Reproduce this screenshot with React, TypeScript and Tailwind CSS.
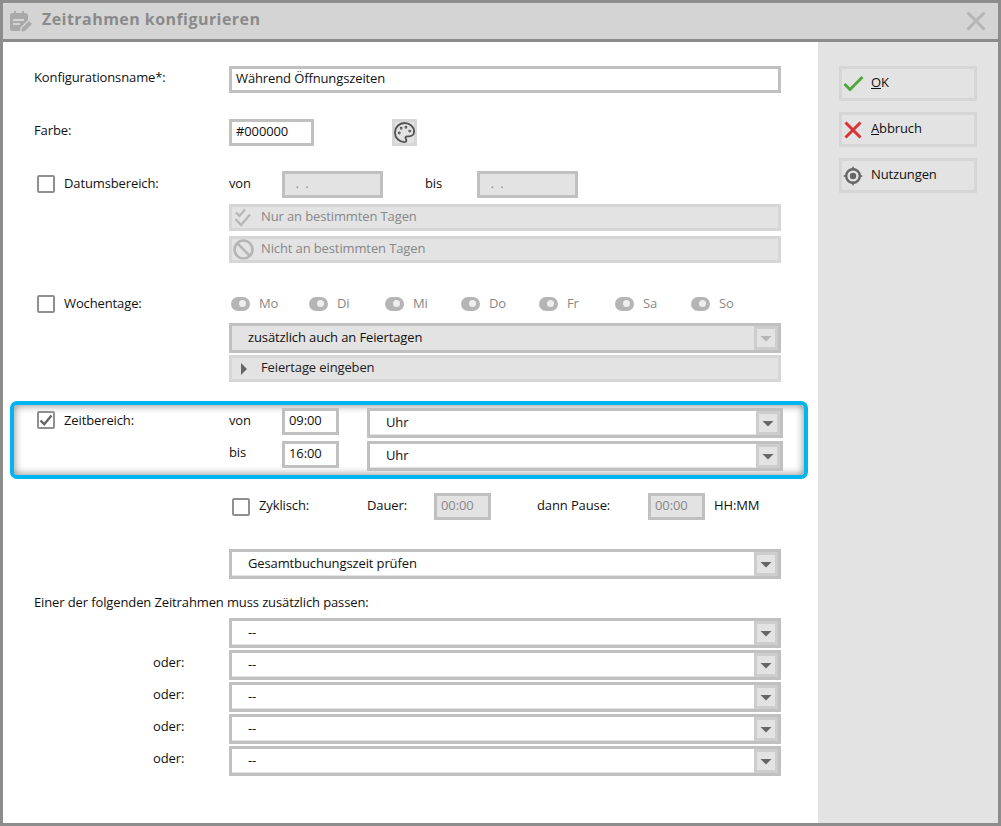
import type { ReactNode } from "react";
import { Palette } from "lucide-react";

function Checkbox({ checked = false }: { checked?: boolean }) {
  return (
    <span className="flex h-[18px] w-[18px] shrink-0 items-center justify-center rounded-[2px] border-2 border-[#8f8f8f] bg-white">
      {checked && (
        <svg width="14" height="14" viewBox="0 0 14 14" fill="none">
          <path d="M1.5 7.5 5.2 11.2 12.5 2.5" stroke="#666" strokeWidth="2.4" />
        </svg>
      )}
    </span>
  );
}

function TextBox({ value, width, disabled = false }: { value: string; width: string; disabled?: boolean }) {
  return (
    <div
      className={`flex h-[27px] shrink-0 items-center whitespace-pre border-[3px] border-[#c0c0c0] pb-[2px] pl-1 ${width} ${
        disabled ? "bg-[#e3e3e3] text-[#888]" : "bg-white text-[#111]"
      }`}
    >
      {value}
    </div>
  );
}

function SelectBox({ value, width = "w-[552px]", disabled = false }: { value: string; width?: string; disabled?: boolean }) {
  return (
    <div className={`flex h-[30px] shrink-0 border-[3px] border-[#c0c0c0] ${width} ${disabled ? "bg-[#e3e3e3]" : "bg-white"}`}>
      <div className="flex-1 border-b border-[#e3e3e3] pl-4 leading-[23px] text-[#111]">{value}</div>
      <div className="flex w-[24px] shrink-0 items-center justify-center border-[3px] border-[#cdcdcd] bg-[#e3e3e3]">
        <svg width="12" height="7" viewBox="0 0 12 7">
          <path d="M0.5 1H11.5L6 6.5Z" fill={disabled ? "#b5b5b5" : "#666"} />
        </svg>
      </div>
    </div>
  );
}

function BarButton({ icon, label, dark = false }: { icon: ReactNode; label: string; dark?: boolean }) {
  return (
    <div className={`flex h-[27px] w-[552px] items-center border-[3px] border-[#d6d6d6] bg-[#e3e3e3] ${dark ? "text-[#222]" : "text-[#888]"}`}>
      <span className="flex w-[29px] shrink-0 items-center pl-[1px]">{icon}</span>
      <span className="pb-[2px]">{label}</span>
    </div>
  );
}

function SideButton({ icon, children }: { icon: ReactNode; children: ReactNode }) {
  return (
    <div className="flex h-[35px] w-[138px] items-center border-[3px] border-[#d6d6d6] bg-[#e3e3e3] text-[#111]">
      <span className="flex w-[29px] shrink-0 items-center pl-[1px]">{icon}</span>
      <span className="pb-[2px]">{children}</span>
    </div>
  );
}

const days = [
  { name: "Mo", width: "w-[78px]" },
  { name: "Di", width: "w-[76px]" },
  { name: "Mi", width: "w-[76px]" },
  { name: "Do", width: "w-[78px]" },
  { name: "Fr", width: "w-[76px]" },
  { name: "Sa", width: "w-[76px]" },
  { name: "So", width: "w-[76px]" },
];

export default function App() {
  return (
    <div className="flex h-[826px] w-[1001px] flex-col overflow-hidden border-[3px] border-[#8c8c8c] bg-white font-['Open_Sans',sans-serif] text-[13px] tracking-[-0.12px] text-[#111]">
      <header className="flex h-[39px] shrink-0 items-center border-b-[3px] border-[#8c8c8c] bg-[#d4d4d4] pl-[7px] pr-[12px]">
        <svg width="22" height="21" viewBox="0 0 22 21" fill="#a9a9a9">
          <path d="M4 0h2v2h6V0h2v2h1.5A2.5 2.5 0 0 1 18 4.5V9l-7.5 7.5-.5 3.5H2.5A2.5 2.5 0 0 1 0 17.500V4.500A2.500 2.500 0 0 1 2.500 2H4Z" />
          <path d="M3 8h11v2H3ZM3 12h7v2H3Z" fill="#d4d4d4" />
          <path d="M12 17 19 10l3 3-7 7-3.500.5Z" />
        </svg>
        <h1 className="ml-[10px] pb-[4px] text-[16px] font-bold tracking-[0.45px] text-[#8a8a8a]">Zeitrahmen konfigurieren</h1>
        <svg className="ml-auto" width="20" height="20" viewBox="0 0 20 20" fill="none">
          <path d="M1.500 1.500 18.500 18.500M18.500 1.500 1.500 18.500" stroke="#b5b5b5" strokeWidth="3" />
        </svg>
      </header>

      <div className="flex min-h-0 flex-1">
        <main className="w-[815px] shrink-0 pt-[24px]">
          <div className="flex h-[27px] pl-[31px]">
            <span className="w-[195px] leading-[22px]">Konfigurationsname*:</span>
            <TextBox value="Während Öffnungszeiten" width="w-[552px]" />
          </div>

          <div className="mt-[26px] flex h-[27px] pl-[31px]">
            <span className="w-[195px] leading-[22px]">Farbe:</span>
            <TextBox value="#000000" width="w-[85px]" />
            <div className="ml-[78px] flex h-[27px] w-[25px] items-center justify-center border-[3px] border-[#d6d6d6] bg-[#e3e3e3]">
              <Palette size={23} strokeWidth={2} className="shrink-0 text-[#555]" />
            </div>
          </div>

          <div className="mt-[25px] flex h-[27px] pl-[34px]">
            <span className="mt-[4px]">
              <Checkbox />
            </span>
            <span className="ml-[9px] w-[165px] leading-[25px]">Datumsbereich:</span>
            <span className="w-[53px] leading-[25px]">von</span>
            <TextBox value="  .  ." width="w-[101px]" disabled />
            <span className="ml-[42px] w-[52px] leading-[25px]">bis</span>
            <TextBox value="  .  ." width="w-[101px]" disabled />
          </div>

          <div className="ml-[226px] mt-[6px]">
            <BarButton
              label="Nur an bestimmten Tagen"
              icon={
                <svg width="20" height="20" viewBox="0 0 20 20" fill="none" stroke="#b5b5b5" strokeWidth="2.200">
                  <path d="M3 4.500 6.500 8 12 1.500M2.500 11 8 17 17 6.500" />
                </svg>
              }
            />
            <div className="mt-[5px]">
              <BarButton
                label="Nicht an bestimmten Tagen"
                icon={
                  <svg width="21" height="21" viewBox="0 0 21 21" fill="none" stroke="#b5b5b5" strokeWidth="2.600">
                    <circle cx="10.500" cy="10.500" r="9" />
                    <path d="M4.200 4.200 16.800 16.800" />
                  </svg>
                }
              />
            </div>
          </div>

          <div className="mt-[27px] flex h-[27px] items-center pl-[34px]">
            <Checkbox />
            <span className="ml-[9px] w-[167px]">Wochentage:</span>
            {days.map((day) => (
              <div key={day.name} className={`flex shrink-0 items-center ${day.width}`}>
                <span className="flex h-[14px] w-[19px] items-center justify-end rounded-full bg-[#b5b5b5] pr-[4px]">
                  <span className="h-[7px] w-[7px] rounded-full bg-[#eee]" />
                </span>
                <span className="ml-[9px] text-[#888]">{day.name}</span>
              </div>
            ))}
          </div>

          <div className="ml-[226px] mt-[6px]">
            <SelectBox value="zusätzlich auch an Feiertagen" disabled />
            <div className="mt-[2px]">
              <BarButton
                dark
                label="Feiertage eingeben"
                icon={
                  <svg className="ml-[8px]" width="6" height="12" viewBox="0 0 6 12">
                    <path d="M0 0 6 6 0 12Z" fill="#666" />
                  </svg>
                }
              />
            </div>
          </div>

          <section className="ml-[7px] mt-[19px] h-[78px] w-[798px] rounded-[7px] border-[4px] border-[#00b4f0] pt-[3px] shadow-[inset_0_0_8px_rgba(0,0,0,0.5)]">
            <div className="flex h-[30px] pl-[23px]">
              <span className="mt-[3px]">
                <Checkbox checked />
              </span>
              <span className="ml-[9px] w-[165px] pt-[1px] leading-[23px]">Zeitbereich:</span>
              <span className="w-[53px] pt-[1px] leading-[23px]">von</span>
              <TextBox value="09:00" width="w-[57px]" />
              <div className="ml-[28px]">
                <SelectBox value="Uhr" width="w-[416px]" />
              </div>
            </div>
            <div className="mt-[3px] flex h-[30px] pl-[215px]">
              <span className="w-[53px] leading-[23px]">bis</span>
              <TextBox value="16:00" width="w-[57px]" />
              <div className="ml-[28px]">
                <SelectBox value="Uhr" width="w-[416px]" />
              </div>
            </div>
          </section>

          <div className="mt-[14px] flex h-[27px] items-center pl-[229px]">
            <Checkbox />
            <span className="ml-[9px] w-[108px] pb-[2px]">Zyklisch:</span>
            <span className="w-[67px] pb-[2px]">Dauer:</span>
            <TextBox value="00:00" width="w-[57px]" disabled />
            <span className="ml-[46px] w-[111px] pb-[2px]">dann Pause:</span>
            <TextBox value="00:00" width="w-[57px]" disabled />
            <span className="ml-[9px] pb-[2px]">HH:MM</span>
          </div>

          <div className="ml-[226px] mt-[29px]">
            <SelectBox value="Gesamtbuchungszeit prüfen" />
          </div>

          <p className="ml-[31px] mt-[14px] leading-[18px]">Einer der folgenden Zeitrahmen muss zusätzlich passen:</p>

          <div className="mt-[7px] flex flex-col gap-[2px]">
            {["", "oder:", "oder:", "oder:", "oder:"].map((label, i) => (
              <div key={i} className="flex h-[30px]">
                <span className="w-[226px] pl-[150px] leading-[24px]">{label}</span>
                <SelectBox value="--" />
              </div>
            ))}
          </div>
        </main>

        <aside className="flex flex-1 flex-col gap-[11px] bg-[#e3e3e3] pl-[21px] pt-[24px]">
          <SideButton
            icon={
              <svg width="21" height="17" viewBox="0 0 21 17" fill="none">
                <path d="M1.500 9 7 14.500 19.500 2" stroke="#4fa83d" strokeWidth="3" />
              </svg>
            }
          >
            <u>O</u>K
          </SideButton>
          <SideButton
            icon={
              <svg className="ml-[1px]" width="18" height="18" viewBox="0 0 18 18" fill="none">
                <path d="M1.500 1.500 16.500 16.500M16.500 1.500 1.500 16.500" stroke="#db3236" strokeWidth="3" />
              </svg>
            }
          >
            <u>A</u>bbruch
          </SideButton>
          <SideButton
            icon={
              <svg width="20" height="20" viewBox="0 0 20 20" fill="none">
                <circle cx="10" cy="10" r="6.800" stroke="#666" strokeWidth="2.400" />
                <circle cx="10" cy="10" r="3.200" fill="#666" />
                <path d="M10 0 8.500 3h3ZM10 20l-1.500-3h3ZM0 10l3-1.500v3ZM20 10l-3-1.500v3Z" fill="#666" />
              </svg>
            }
          >
            Nutzungen
          </SideButton>
        </aside>
      </div>
    </div>
  );
}
